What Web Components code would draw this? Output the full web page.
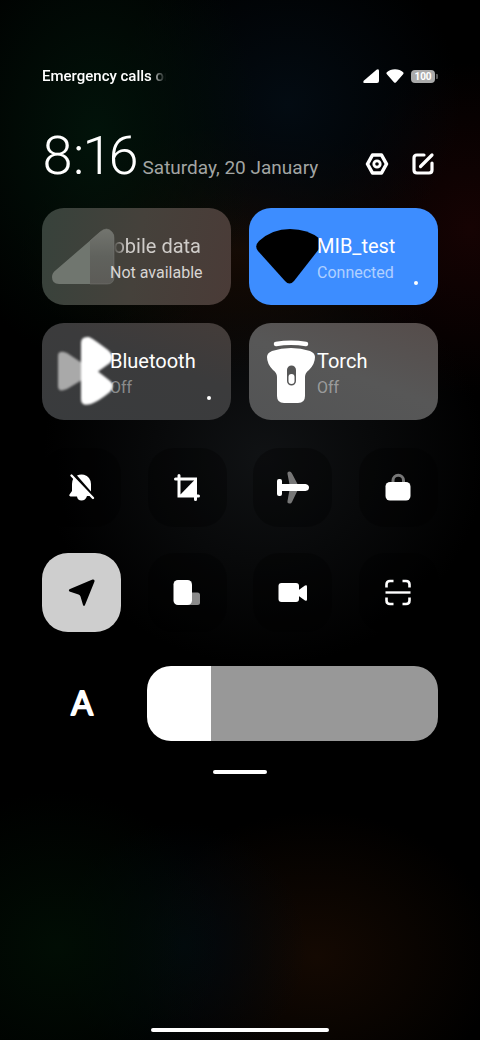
<!DOCTYPE html>
<html lang="en">
<head>
<meta charset="utf-8">
<meta name="viewport" content="width=device-width, initial-scale=1">
<title>Control centre</title>
<style>
html { background: #000; }
body { margin: 0; font-family: Roboto, "Liberation Sans", sans-serif; color: #fff; }
</style>
</head>
<body>
<control-centre></control-centre>
<script>
const ICONS = {
  signal: [16, 14, '<path d="M1 11.5 13.5 .8Q16-.6 16 2v10q0 2-2 2H1.500Q-.8 13.500 1 11.500Z" fill="currentColor"/>'],
  wifi: [18, 14, '<path d="M.8 3.200Q4 .2 9 .2t8.200 3q.9 1-.1 2.100l-7 8q-1.100 1.100-2.200 0l-7-8Q-.2 4.200.8 3.200Z" fill="currentColor"/>'],
  settings: [24, 22, '<path d="M7.500 2h9l5 9-5 9h-9l-5-9Z" fill="none" stroke="currentColor" stroke-width="3.600" stroke-linejoin="round"/><circle cx="12" cy="11" r="3.200" fill="none" stroke="currentColor" stroke-width="2.800"/>'],
  edit: [22, 22, '<path d="M12 2H5Q2 2 2 5v12q0 3 3 3h12q3 0 3-3v-7M8.500 13.500 20 2" fill="none" stroke="currentColor" stroke-width="3.200" stroke-linecap="round" stroke-linejoin="round"/>'],
  tileData: [68, 97, '<defs><linearGradient id="g" x1="0" y1="0" x2="0" y2="1"><stop offset="0" stop-color="#73756f"/><stop offset=".5" stop-color="#60625d"/><stop offset="1" stop-color="#5c5b57"/></linearGradient><clipPath id="c"><path d="M14 62 58 24Q65 18 70 24 72 26 72 30V69Q72 76 65 76H17Q10 76 10 69 10 65 14 62Z"/></clipPath></defs><g clip-path="url(#c)"><path d="M9 20h39v57H9z" fill="#70766f"/><path d="M48 20h25v57H48z" fill="url(#g)"/></g><path d="M48 33 58 24Q65 18 70 24 72 26 72 30V69Q72 76 65 76H48" fill="none" stroke="#777a74" stroke-opacity=".5"/>'],
  tileWifi: [68, 97, '<path d="M10 33Q23 21 41 21T71 31Q73.500 35 70 41L45 73Q40.500 78 36 73L9 43Q5 38 10 33Z" fill="#000"/>'],
  tileBluetooth: [68, 97, '<g style="filter:blur(.8px)"><path d="M16 33Q16 28 22 29L25 30 40 40V57L25 66Q16 70 16 63Z" fill="#a9a9a9"/><path d="M39 20Q39 13 47 14 50 15 66 27 74 34 68 40L56 48.500 67 57Q74 62 68 69 57 78 49 81 39 84 39 76Z" fill="#fff"/></g>'],
  tileTorch: [68, 97, '<path d="M27 21Q42 18.500 57 21" fill="none" stroke="#fff" stroke-width="4.500" stroke-linecap="round"/><path fill-rule="evenodd" d="M18 34Q18 30 23 28 32 25 42 25T61 28Q66 30 66 34 66 41 60 47 56 50 56 54V73Q56 80 49 80H35Q28 80 28 73V54Q28 50 24 47 18 41 18 34ZM38 47v11a4.500 4.500 0 0 0 9 0V47a4.500 4.500 0 0 0-9 0Z" fill="#fff"/><rect x="39.500" y="51" width="6" height="10" rx="3" fill="#fff"/>'],
  bellOff: [32, 32, '<path d="M9 7.500 25 24H21Q19.500 28.500 15.500 28.500T11 24.500H4.500Q2.500 24 3.500 22.500L6 19V12Q6 9 7.500 6ZM11 3.500Q14 2 18 2.700 24.500 4.500 25 12V19.500Z" fill="currentColor"/><path d="m5.500 3.500 21.500 22.500" stroke="currentColor" stroke-width="2.400" stroke-linecap="round"/>'],
  crop: [32, 32, '<path d="M4.500 7H24.500V27.500M8 3.500V24H27.500" fill="none" stroke="currentColor" stroke-width="3" stroke-linecap="round"/><path d="M24.500 7V24H8Z" fill="currentColor"/>'],
  plane: [32, 32, '<path d="M10.500 2Q10-.5 12.500-.5 14-.5 15 1.500L20.500 12V18.500L15 30Q14 32 12.500 31.500 10 31.500 10.500 29L13 15Z" fill="#777"/><path d="M3 12H28.500Q32 12.500 32 15.500T28.500 19H3Z" fill="currentColor"/><rect y="7" width="5" height="17" rx="2" fill="currentColor"/>'],
  lock: [32, 32, '<path d="M11 12V8.500a5.200 5.200 0 0 1 10.500 0V12" fill="none" stroke="#777" stroke-width="3"/><rect x="3.500" y="10" width="25" height="18.500" rx="4.500" fill="currentColor"/>'],
  location: [32, 32, '<path d="M4 12 26.500 2.500Q29 2 28.500 4.500L19 28Q18 30 17 28L14.500 19.500Q14 18 12.500 17.500L3.500 14.500Q2 13 4 12Z" fill="currentColor"/>'],
  float: [32, 32, '<rect x="16" y="15.500" width="13" height="12.500" rx="2.500" fill="#8a8a8a"/><rect x="2.500" y="3" width="18.500" height="25" rx="4.500" fill="currentColor"/>'],
  video: [32, 32, '<rect x="1.500" y="6" width="20.500" height="19" rx="3" fill="currentColor"/><path d="M21 13.500 28 8.500Q30 7.500 30 9.500V22.500Q30 24.500 28 23.500L21 18.500Z" fill="currentColor"/>'],
  scan: [32, 32, '<path d="M4.500 10.500V7.500Q4.500 4 8 4h3.500M20.500 4H24q3.500 0 3.500 3.500v3M27.500 20.500V23.500Q27.500 27 24 27H20.500M11.500 27H8Q4.500 27 4.500 23.500V20.500" fill="none" stroke="currentColor" stroke-width="2.600"/><path d="M3.500 15.500h25" stroke="currentColor" stroke-width="2.400"/>']
};

class QsIcon extends HTMLElement {
  static observedAttributes = ["name"];
  constructor() {
    super();
    this.attachShadow({ mode: "open" });
  }
  attributeChangedCallback() {
    const [w, h, art] = ICONS[this.getAttribute("name")];
    this.shadowRoot.innerHTML = `<style>
      :host { display: block; flex: none; }
      svg { display: block; overflow: visible; }
    </style><svg width="${w}" height="${h}" viewBox="0 0 ${w} ${h}" aria-hidden="true">${art}</svg>`;
  }
}
customElements.define("qs-icon", QsIcon);

class StatusBar extends HTMLElement {
  constructor() {
    super();
    this.attachShadow({ mode: "open" }).innerHTML = `<style>
      :host { display: flex; align-items: center; height: 20px; gap: 7px; }
      .carrier { width: 124px; margin-right: auto; overflow: hidden; white-space: nowrap;
        font-size: 15px; font-weight: 500; line-height: 22px;
        -webkit-mask-image: linear-gradient(90deg, #000 108px, transparent 124px);
        mask-image: linear-gradient(90deg, #000 108px, transparent 124px); }
      .battery { display: flex; align-items: center; gap: 1px; }
      .level { width: 24px; height: 13px; border-radius: 4px; background: #aaa; color: #fff;
        font-size: 10px; font-weight: 700; line-height: 14px; text-align: center; }
      .nub { width: 2px; height: 5px; border-radius: 0 1px 1px 0; background: #555; }
    </style>
    <span class="carrier">Emergency calls only</span>
    <qs-icon name="signal"></qs-icon>
    <qs-icon name="wifi"></qs-icon>
    <span class="battery"><span class="level">100</span><span class="nub"></span></span>`;
  }
}
customElements.define("status-bar", StatusBar);

class ClockHeader extends HTMLElement {
  constructor() {
    super();
    this.attachShadow({ mode: "open" }).innerHTML = `<style>
      :host { display: flex; align-items: flex-end; height: 56px; }
      .when { display: flex; align-items: baseline; gap: 4px; flex: 1; white-space: nowrap; }
      time { font-size: 54px; font-weight: 300; line-height: 48px; font-variant-numeric: proportional-nums; }
      .date { font-size: 19px; line-height: 24px; color: #a2a5a3; }
      .actions { display: flex; gap: 23px; padding: 0 4px 5px 0; }
      button { display: block; padding: 0; border: 0; background: none; color: #fff; }
    </style>
    <div class="when"><time datetime="08:16">8:16</time><span class="date">Saturday, 20 January</span></div>
    <div class="actions">
      <button type="button" aria-label="Settings"><qs-icon name="settings"></qs-icon></button>
      <button type="button" aria-label="Edit"><qs-icon name="edit"></qs-icon></button>
    </div>`;
  }
}
customElements.define("clock-header", ClockHeader);

class QsTile extends HTMLElement {
  constructor() {
    super();
    this.attachShadow({ mode: "open" }).innerHTML = `<style>
      :host { display: block; min-width: 0; }
      button { position: relative; display: flex; align-items: center; width: 100%; height: 97px; padding: 0;
        border: 0; border-radius: 22px; background: var(--tile, #444); color: #fff; font: inherit; text-align: left; }
      .label { position: relative; flex: 1; min-width: 0; overflow: hidden; white-space: nowrap; padding-top: 4px; }
      .title, .state { display: block; }
      .title { font-size: 20px; line-height: 28px; }
      .state { font-size: 16px; line-height: 26px; color: rgba(255, 255, 255, .42); }
      :host([kind="data"]) .title { color: #cfccc9; text-indent: -14px;
        -webkit-mask-image: linear-gradient(90deg, transparent 3px, #000 16px);
        mask-image: linear-gradient(90deg, transparent 3px, #000 16px); }
      :host([kind="data"]) .state { color: #d8d5d3; }
      :host([kind="wifi"]) .state { color: rgba(255, 255, 255, .6); }
      .dot { display: none; position: absolute; right: 20px; bottom: 20px; width: 4px; height: 4px;
        border-radius: 50%; background: #fff; }
      :host([more]) .dot { display: block; }
    </style>
    <button type="button"><qs-icon></qs-icon>
      <span class="label"><span class="title"><slot></slot></span><span class="state"><slot name="state"></slot></span></span>
      <span class="dot"></span></button>`;
  }
  connectedCallback() {
    this.shadowRoot.querySelector("qs-icon").setAttribute("name", this.getAttribute("icon"));
  }
}
customElements.define("qs-tile", QsTile);

class QsToggle extends HTMLElement {
  constructor() {
    super();
    this.attachShadow({ mode: "open" }).innerHTML = `<style>
      :host { display: block; }
      button { display: grid; place-items: center; width: 100%; height: 79px; padding: 0; border: 0;
        border-radius: 26px; background: rgba(0, 0, 0, .3); color: #fff; font: inherit; }
      :host([on]) button { background: #cecece; color: #000; }
    </style><button type="button"><slot></slot></button>`;
  }
  connectedCallback() {
    const button = this.shadowRoot.querySelector("button");
    button.setAttribute("aria-label", this.getAttribute("label"));
    button.setAttribute("aria-pressed", this.hasAttribute("on"));
  }
}
customElements.define("qs-toggle", QsToggle);

class BrightnessSlider extends HTMLElement {
  constructor() {
    super();
    this.attachShadow({ mode: "open" }).innerHTML = `<style>
      :host { display: block; min-width: 0; }
      input { -webkit-appearance: none; appearance: none; display: block; width: 100%; height: 75px; margin: 0;
        border-radius: 24px; background: linear-gradient(90deg, #fff var(--level), #989898 var(--level)); }
      input::-webkit-slider-thumb { -webkit-appearance: none; width: 1px; height: 75px; background: none; }
    </style><input type="range" min="0" max="100" value="22" aria-label="Brightness">`;
    const input = this.shadowRoot.querySelector("input");
    const paint = () => input.style.setProperty("--level", input.value + "%");
    input.addEventListener("input", paint);
    paint();
  }
}
customElements.define("brightness-slider", BrightnessSlider);

class ControlCentre extends HTMLElement {
  constructor() {
    super();
    this.attachShadow({ mode: "open" }).innerHTML = `<style>
      :host { display: flex; flex-direction: column; box-sizing: border-box; min-height: 100vh; padding: 66px 42px 8px;
        background:
          radial-gradient(ellipse 34% 22% at 20% 13%, #02130a, transparent),
          radial-gradient(ellipse 36% 16% at 60% 10%, #030b12, transparent),
          radial-gradient(ellipse 30% 16% at 98% 22%, #160303, transparent),
          radial-gradient(ellipse 46% 12% at 50% 24%, #160b04, transparent),
          radial-gradient(ellipse 46% 20% at 55% 44%, #101214, transparent),
          radial-gradient(ellipse 34% 15% at 12% 91%, #010d04, transparent),
          radial-gradient(ellipse 26% 12% at 38% 91%, #02090e, transparent),
          radial-gradient(ellipse 38% 14% at 66% 92%, #140902, transparent),
          #000; }
      clock-header { margin-top: 38px; }
      .tiles { display: grid; grid-template-columns: 1fr 1fr; gap: 18px; margin-top: 28px; }
      .toggles { display: grid; grid-template-columns: repeat(4, 79px); justify-content: space-between;
        row-gap: 26px; margin-top: 28px; }
      .brightness { display: grid; grid-template-columns: 79px 1fr; gap: 26px; align-items: center; margin-top: 32px; }
      .auto { display: block; overflow: visible; }
      .auto text { font: 400 32px Lato, sans-serif; fill: #fff; stroke: #fff; stroke-width: 2px; stroke-linejoin: round; }
      .grip { width: 54px; height: 4px; margin: 27px auto 0; border-radius: 2px; background: #fff; }
      .home { width: 178px; height: 4px; margin: auto auto 0; border-radius: 2px; background: #fff; }
      .data { --tile: linear-gradient(100deg, #37423b, #45413b 50%, #4a3b37); }
      .wifi { --tile: #3d8dff; }
      .bt { --tile: linear-gradient(200deg, #443c39, #3b3b3c 40%, #393b3d); }
      .torch { --tile: linear-gradient(200deg, #554c4a, #575757 50%, #535455); }
    </style>
    <status-bar></status-bar>
    <clock-header></clock-header>
    <div class="tiles">
      <qs-tile class="data" kind="data" icon="tileData">Mobile data<span slot="state">Not available</span></qs-tile>
      <qs-tile class="wifi" kind="wifi" icon="tileWifi" more>MIB_test<span slot="state">Connected</span></qs-tile>
      <qs-tile class="bt" icon="tileBluetooth" more>Bluetooth<span slot="state">Off</span></qs-tile>
      <qs-tile class="torch" icon="tileTorch">Torch<span slot="state">Off</span></qs-tile>
    </div>
    <div class="toggles">
      <qs-toggle label="Mute"><qs-icon name="bellOff"></qs-icon></qs-toggle>
      <qs-toggle label="Screenshot"><qs-icon name="crop"></qs-icon></qs-toggle>
      <qs-toggle label="Aeroplane mode"><qs-icon name="plane"></qs-icon></qs-toggle>
      <qs-toggle label="Lock screen"><qs-icon name="lock"></qs-icon></qs-toggle>
      <qs-toggle label="Location" on><qs-icon name="location"></qs-icon></qs-toggle>
      <qs-toggle label="Floating windows"><qs-icon name="float"></qs-icon></qs-toggle>
      <qs-toggle label="Screen recorder"><qs-icon name="video"></qs-icon></qs-toggle>
      <qs-toggle label="Scanner"><qs-icon name="scan"></qs-icon></qs-toggle>
    </div>
    <div class="brightness">
      <qs-toggle label="Automatic brightness"><svg class="auto" width="48" height="48" viewBox="0 0 48 48"><text x="24" y="35" text-anchor="middle">A</text></svg></qs-toggle>
      <brightness-slider></brightness-slider>
    </div>
    <div class="grip"></div>
    <div class="home"></div>`;
  }
}
customElements.define("control-centre", ControlCentre);
</script>
</body>
</html>
